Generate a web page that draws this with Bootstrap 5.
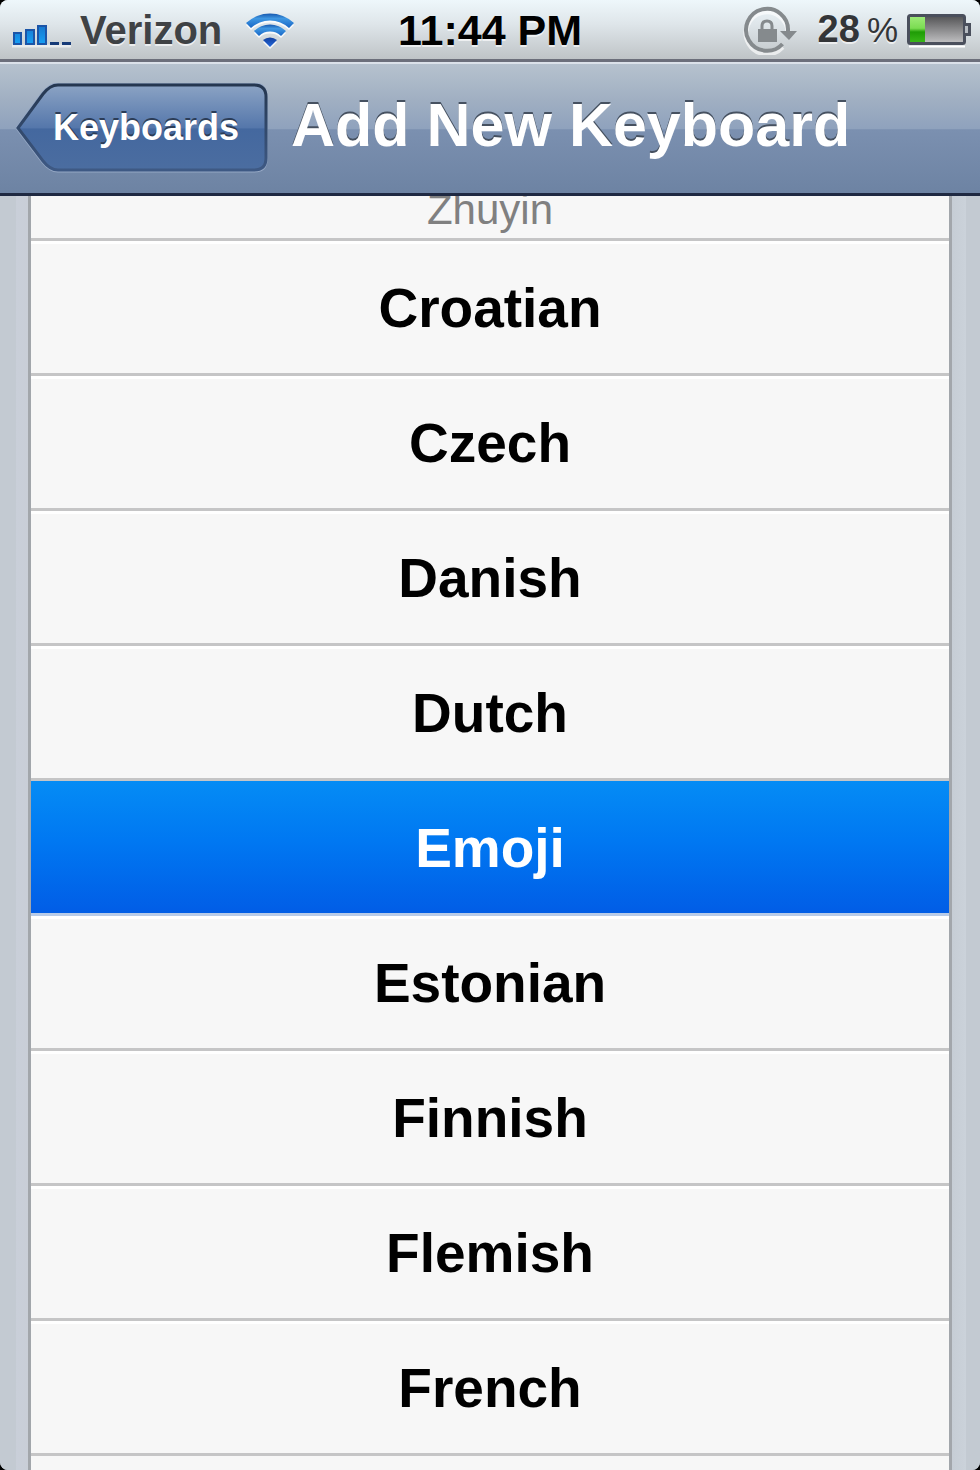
<!DOCTYPE html>
<html lang="en">
<head>
<meta charset="utf-8">
<meta name="viewport" content="width=device-width, initial-scale=1">
<title>Add New Keyboard</title>
<link href="https://cdn.jsdelivr.net/npm/bootstrap@5.3.0/dist/css/bootstrap.min.css" rel="stylesheet">
<style>
  body { background: #000; font-family: "Liberation Sans", Arial, sans-serif; }
  .phone { border-radius: 8px; background: #c5cbd4; }
  .status { height: 62px; border-bottom: 3px solid #6c6f7b; background: linear-gradient(#eef7fb, #dfe6ea 40%, #bfc4c7); text-shadow: 0 2px 0 rgba(255,255,255,.65); line-height: 40px; }
  .status-side { flex: 1 1 0; }
  .carrier { font-size: 40px; color: #3f4245; margin-left: 9px; margin-right: 23px; }
  .clock { font-size: 43px; color: #000; }
  .charge { font-size: 38px; color: #333538; margin-left: 20px; }
  .percent { font-size: 35px; margin-left: 7px; }
  .titlebar { height: 134px; border-bottom: 3px solid #1f2942; border-top: 2px solid #dbe1e9; background: linear-gradient(#b6c2ce, #a0afc2 28%, #8fa2bd 50%, #7b90b0 51%, #6d83a3); }
  .back { height: 90px; width: 252px; margin-left: 16px; font-size: 36px; line-height: 40px; padding: 0 0 2px 37px; text-align: left; text-shadow: 0 -2px 0 #2c3d57; }
  .back-shape { left: 0; top: -1px; z-index: -1; }
  .page-title { font-size: 61px; line-height: 64px; margin-left: 23px; padding-bottom: 8px; text-shadow: 0 -2px 0 #465160; }
  .backdrop { background: linear-gradient(to right, #c3cad2 16px, #c9cfd9 16px, #c9ced7 28px, transparent 28px, transparent calc(100% - 28px), #c6cdd5 calc(100% - 28px), #cbd2da calc(100% - 14px), #c3cad2 calc(100% - 14px)); }
  .languages { margin: 0 28px; border: solid #a2a6ab; border-width: 0 3px; background: #f7f7f7; }
  .language { height: 135px; border: 0; border-bottom: 3px solid #c5c5c6; border-radius: 0; padding: 2px 0 0; background: #f7f7f7; box-shadow: inset 0 3px 0 #fff; color: #000; font-size: 55px; line-height: 64px; font-weight: 700; text-align: center; }
  .language.chosen { background: linear-gradient(#058cf5, #0078f2 45%, #015de6) padding-box; border-color: #b8cbe8; box-shadow: none; color: #fff; }
  .variant { height: 45px; border-bottom: 3px solid #c5c5c6; color: #808080; font-size: 42px; line-height: 42px; padding-bottom: 7px; }
</style>
</head>
<body>
<main class="phone vh-100 d-flex flex-column overflow-hidden">
  <header class="flex-shrink-0">
    <div class="status d-flex align-items-center fw-bold">
      <div class="status-side d-flex align-items-center">
        <svg class="ms-2" width="63" height="40" viewBox="0 0 63 40" role="img" aria-label="Signal strength">
          <defs><linearGradient id="bar" x1="0" x2="0" y1="0" y2="1"><stop stop-color="#1677ce"/><stop offset="1" stop-color="#16a0f5"/></linearGradient></defs>
          <path d="M4 36h60" stroke="#fff" stroke-width="3" opacity=".6"/>
          <g fill="url(#bar)" stroke="#1b55a8" stroke-width="2"><path d="M6 23h7v11H6zM18 20h8v14h-8zM30 16h8v18h-8z"/></g>
          <path d="M42 33.500h9M54 33.500h9" stroke="#173b78" stroke-width="3"/>
        </svg>
        <span class="carrier">Verizon</span>
        <svg width="50" height="42" viewBox="0 0 50 42" role="img" aria-label="Wi-Fi">
          <defs>
            <linearGradient id="wave" x1="0" x2="0" y1="0" y2="1"><stop stop-color="#1758ae"/><stop offset=".35" stop-color="#3f97e2"/><stop offset="1" stop-color="#1766c6"/></linearGradient>
            <linearGradient id="dot" x1="0" x2="0" y1="0" y2="1"><stop stop-color="#123f9e"/><stop offset="1" stop-color="#2368dc"/></linearGradient>
          </defs>
          <path d="M1 14A35 35 0 0 1 49 14L44 19A28 28 0 0 0 6 19ZM9 22A23 23 0 0 1 41 22L36 27A16 16 0 0 0 14 27ZM18 31A11 11 0 0 1 32 31L25 38Z" fill="#fff" opacity=".85" transform="translate(0 2)"/>
          <path d="M1 14A35 35 0 0 1 49 14L44 19A28 28 0 0 0 6 19Z" fill="url(#wave)"/>
          <path d="M9 22A23 23 0 0 1 41 22L36 27A16 16 0 0 0 14 27Z" fill="url(#wave)"/>
          <path d="M18 31A11 11 0 0 1 32 31L25 38Z" fill="url(#dot)"/>
        </svg>
      </div>
      <time class="clock">11:44 PM</time>
      <div class="status-side d-flex align-items-center justify-content-end">
        <svg width="56" height="50" viewBox="0 0 56 50" role="img" aria-label="Orientation locked">
          <path d="M40.500 40A21 21 0 1 1 46 26" fill="none" stroke="#fff" stroke-width="5" opacity=".65" transform="translate(0 2)"/>
          <g fill="none" stroke="#858a8d"><path d="M40.500 39A21 21 0 1 1 46 26" stroke-width="4"/><path d="M20 25v-4q0-5 5-5t5 5v4" stroke-width="3"/></g>
          <path d="M16 24h19v13H16zM38 26h17l-8 9z" fill="#858a8d"/>
        </svg>
        <span class="charge">28<span class="percent fw-normal">%</span></span>
        <svg class="ms-2 me-2" width="66" height="36" viewBox="0 0 66 36" role="img" aria-label="Battery">
          <defs><linearGradient id="empty" x1="0" x2="0" y1="0" y2="1"><stop stop-color="#515153"/><stop offset="1" stop-color="#c3c3c5"/></linearGradient><linearGradient id="full" x1="0" x2="0" y1="0" y2="1"><stop stop-color="#9dea77"/><stop offset=".45" stop-color="#7bdc52"/><stop offset=".6" stop-color="#1f9c06"/><stop offset="1" stop-color="#39b719"/></linearGradient></defs>
          <path d="M3 34.500h56" stroke="#fff" stroke-width="2"/>
          <rect x="2.500" y="3.500" width="56" height="28" rx="2" fill="url(#empty)" stroke="#4a4f5c" stroke-width="3"/>
          <path d="M4 5h15v25H4z" fill="url(#full)"/>
          <path d="M59 12.500h4.500v10H59" fill="#b7bcc2" stroke="#4a4f5c" stroke-width="3"/>
        </svg>
      </div>
    </div>
    <nav class="titlebar d-flex align-items-center" aria-label="Keyboard settings">
      <button type="button" class="back btn position-relative z-1 border-0 fw-bold text-white flex-shrink-0">
        <svg class="back-shape position-absolute" width="252" height="90" viewBox="0 0 252 90" aria-hidden="true">
          <defs><linearGradient id="glass" x1="0" x2="0" y1="0" y2="1"><stop stop-color="#8ba3c4"/><stop offset=".5" stop-color="#5577ab"/><stop offset=".52" stop-color="#44689f"/><stop offset="1" stop-color="#4b6da0"/></linearGradient><linearGradient id="rim" x1="0" x2="0" y1="0" y2="1"><stop stop-color="#253750"/><stop offset="1" stop-color="#3e5984"/></linearGradient></defs>
          <path d="M1 45L26 11Q34 1 42 1H238Q250 1 250 13V77Q250 88 238 88H42Q34 88 26 78Z" fill="none" stroke="#94a7c4" stroke-width="3"/>
          <path d="M2 45L27 11Q34 2 42 2H238Q250 2 250 14V75Q250 87 238 87H42Q34 87 27 78Z" fill="url(#glass)" stroke="url(#rim)" stroke-width="3"/>
        </svg>
        Keyboards
      </button>
      <h1 class="page-title fw-bold text-white text-nowrap mb-0">Add New Keyboard</h1>
    </nav>
  </header>
  <section class="backdrop flex-grow-1 overflow-hidden" aria-label="Languages">
    <div class="languages h-100 overflow-hidden">
      <div class="variant d-flex align-items-end justify-content-center">Zhuyin</div>
      <div class="list-group rounded-0">
        <button type="button" class="language list-group-item list-group-item-action">Croatian</button>
        <button type="button" class="language list-group-item list-group-item-action">Czech</button>
        <button type="button" class="language list-group-item list-group-item-action">Danish</button>
        <button type="button" class="language list-group-item list-group-item-action">Dutch</button>
        <button type="button" class="language chosen list-group-item list-group-item-action" aria-current="true">Emoji</button>
        <button type="button" class="language list-group-item list-group-item-action">Estonian</button>
        <button type="button" class="language list-group-item list-group-item-action">Finnish</button>
        <button type="button" class="language list-group-item list-group-item-action">Flemish</button>
        <button type="button" class="language list-group-item list-group-item-action">French</button>
      </div>
    </div>
  </section>
</main>
<script src="https://cdn.jsdelivr.net/npm/bootstrap@5.3.0/dist/js/bootstrap.bundle.min.js"></script>
</body>
</html>
